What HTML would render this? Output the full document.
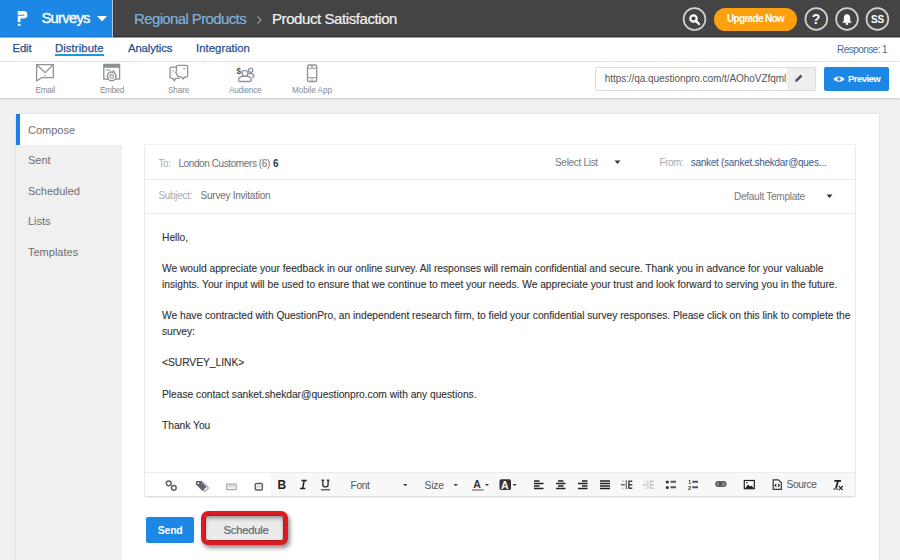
<!DOCTYPE html>
<html><head><meta charset="utf-8">
<style>
*{margin:0;padding:0;box-sizing:border-box}
html,body{width:900px;height:560px;overflow:hidden;background:#f1f1f1;font-family:"Liberation Sans",sans-serif}
.a{position:absolute}
.t{position:absolute;white-space:nowrap;line-height:1}
.nv{font-size:11.3px;color:#2b4f8e;-webkit-text-stroke:0.25px #2b4f8e}
#hdr{left:0;top:0;width:900px;height:37px;background:#444}
#blue{left:0;top:0;width:112px;height:37px;background:#1c87e5}
#nav{left:0;top:37px;width:900px;height:24px;background:#fff}
#tb{left:0;top:62px;width:900px;height:36px;background:#fff;box-shadow:0 1px 2px rgba(0,0,0,.18)}
#sep{left:0;top:61px;width:900px;height:1px;background:#e6e6e6}
#panel{left:16px;top:114px;width:863px;height:446px;background:#fff;box-shadow:0 0 2px rgba(0,0,0,.15)}
#side{left:16px;top:145px;width:106px;height:415px;background:#f0f0f0}
#bar{left:16px;top:114px;width:4px;height:31px;background:#1a7fe8}
#box{left:145px;top:145px;width:710px;height:351px;background:#fff;box-shadow:0 0 1px rgba(0,0,0,.25),0 1px 2px rgba(0,0,0,.15)}
.hl{position:absolute;left:145px;width:710px;height:1px;background:#ececec}
.body{font-family:"Liberation Sans",sans-serif;font-size:10.26px;color:#333;letter-spacing:-0.02px;-webkit-text-stroke:0.12px #333}
.circ{position:absolute;width:23px;height:23px;border:1.7px solid #d0d0d0;border-radius:50%}
.lab{font-size:8.3px;color:#868d96;letter-spacing:-0.25px;margin-top:0.3px}
.side{font-size:11px;color:#6e6e6e;letter-spacing:0px}
.ic{position:absolute}
</style></head><body>
<div id="hdr" class="a"></div>
<div id="blue" class="a"></div>
<div class="a" style="left:113px;top:36px;width:787px;height:1px;background:#2e2e2e"></div>
<div class="a" style="left:0;top:36px;width:112px;height:1px;background:#0a76d9"></div>
<div class="a" style="left:112px;top:0;width:1px;height:37px;background:#b5c9dc"></div>
<div class="a" style="left:0;top:37px;width:112px;height:1px;background:#8cc0ee;z-index:2"></div>
<div class="a" style="left:112px;top:37px;width:788px;height:1px;background:#a0a0a0;z-index:2"></div>
<div class="a" style="left:113px;top:0;width:1px;height:37px;background:#383838"></div>
<!-- logo -->
<svg class="ic" style="left:0;top:0" width="40" height="37" viewBox="0 0 40 37">
<path d="M17.8 11 H23.6 A3.8 3.8 0 0 1 23.6 18.6 H20.5 V22 H17.8 Z M17.8 14.7 V15.8 H23.8 A0.55 0.55 0 0 0 23.8 14.7 Z" fill="#fff" fill-rule="evenodd"/>
<rect x="17.8" y="23.7" width="2.7" height="2.2" fill="#fff"/>
</svg>
<div class="t" style="left:41.5px;top:11.2px;font-size:14.8px;color:#fff;letter-spacing:-0.75px;-webkit-text-stroke:0.35px #fff">Surveys</div>
<svg class="ic" style="left:97px;top:16px" width="10" height="6" viewBox="0 0 10 6"><path d="M0 0 H10 L5 5.5 Z" fill="#fff"/></svg>
<div class="t" style="left:134px;top:11.3px;font-size:15px;color:#7fb2dc;letter-spacing:-0.62px;-webkit-text-stroke:0.2px #7fb2dc">Regional Products</div>
<svg class="ic" style="left:256px;top:15px" width="7" height="10" viewBox="0 0 7 10"><path d="M1.5 1.5 L5 5 L1.5 8.5" fill="none" stroke="#9a9a9a" stroke-width="1.2"/></svg>
<div class="t" style="left:272px;top:11.3px;font-size:15px;color:#f2f2f2;letter-spacing:-0.42px;-webkit-text-stroke:0.2px #f2f2f2">Product Satisfaction</div>

<svg class="ic" style="left:0;top:0" width="900" height="37" viewBox="0 0 900 37">
<g fill="none" stroke="#d2d2d2" stroke-width="1.7">
<circle cx="694.5" cy="19.1" r="10.9"/><circle cx="816.3" cy="19" r="10.9"/><circle cx="847" cy="19" r="10.9"/><circle cx="877.4" cy="19" r="10.9"/>
</g></svg>
<svg class="ic" style="left:687px;top:12px" width="16" height="16" viewBox="0 0 16 16"><circle cx="6.5" cy="6.5" r="3.2" fill="none" stroke="#fff" stroke-width="2.2"/><path d="M8.8 8.8 L12 12" stroke="#fff" stroke-width="2.4" stroke-linecap="round"/></svg>
<div class="a" style="left:714px;top:8px;width:83px;height:23px;border-radius:12px;background:#fca00e"></div>
<div class="t" style="left:727px;top:14.3px;font-size:10px;font-weight:bold;color:#fff;letter-spacing:-0.68px">Upgrade Now</div>
<div class="t" style="left:811.8px;top:12.3px;font-size:14px;font-weight:bold;color:#fff">?</div>
<svg class="ic" style="left:841px;top:13px" width="12" height="13" viewBox="0 0 12 13"><path d="M6 1.2 C3.6 1.2 2.8 3 2.8 5 V7.8 L1.3 9.8 H10.7 L9.2 7.8 V5 C9.2 3 8.4 1.2 6 1.2 Z" fill="#fff"/><circle cx="6" cy="10.8" r="1.3" fill="#fff"/></svg>
<div class="t" style="left:871px;top:14.8px;font-size:10px;font-weight:bold;color:#fff;letter-spacing:-0.2px">SS</div>

<div id="nav" class="a"></div>
<div id="sep" class="a"></div>
<div class="t nv" style="left:12.5px;top:42.8px;letter-spacing:-0.1px">Edit</div>
<div class="t nv" style="left:55px;top:42.8px;letter-spacing:0.1px">Distribute</div>
<div class="a" style="left:55px;top:54px;width:49px;height:2px;background:#1b9ad8"></div>
<div class="t nv" style="left:128px;top:42.8px;letter-spacing:-0.1px">Analytics</div>
<div class="t nv" style="left:196px;top:42.8px;letter-spacing:0.05px">Integration</div>
<div class="t" style="left:837px;top:44.5px;font-size:10px;color:#3a6ea6;letter-spacing:-0.55px">Response: 1</div>

<div id="tb" class="a"></div>
<!-- toolbar icons -->
<svg class="ic" style="left:0;top:0" width="900" height="100" viewBox="0 0 900 100">
<g fill="none" stroke="#8d9299" stroke-width="1.3" stroke-linejoin="round">
<path d="M41.5 77.7 H53.3 V64.6 H36.6 V81 Z"/>
<path d="M37 65 L45.1 72.6 L53 65"/>
<path d="M44.2 75.5 H46" stroke-width="0.8"/>
<rect x="103.8" y="64.5" width="15.8" height="14.6"/>
<path d="M104 66.3 H119.5" stroke-width="3"/>
<path d="M106 70 H110.5 M112.2 71 H115" stroke-width="1"/>
<circle cx="111.7" cy="76.4" r="4.3" stroke-width="1.5" fill="#fff"/>
<circle cx="111.7" cy="76.4" r="1.8" stroke-width="1.1"/>
<path d="M176.2 67.1 H171.4 Q170 67.1 170 68.5 V77 Q170 78.4 171.4 78.4 H172.8 L174.3 81 L175.6 78.4 H179.5"/>
<path d="M177.8 65.3 H186.2 Q187.6 65.3 187.6 66.7 V75.7 Q187.6 77.1 186.2 77.1 H184.6 L183.2 79 L182.3 77.1"/>
<path d="M177.8 65.3 Q176.4 65.5 176.4 67.5 Q176.6 70 176.4 71 L175.6 72.6 Q176.3 73.2 176.6 73.6 Q176.4 74.6 177.2 75 Q177.6 76.6 179 76.6 H180.3 L181.5 78" />
<path d="M173 70 V71.6 M183.4 68.6 H185" stroke-width="1.1"/>
<circle cx="244.9" cy="73.3" r="3" fill="#fff"/>
<circle cx="250.7" cy="70.2" r="2.1"/>
<path d="M248 73.6 Q252.5 72.6 253.8 75.3 Q254.3 77 252 77.5"/>
<path d="M240.2 81.5 Q238.4 81.5 238.6 79.5 Q239 76.3 243 76.3 H246.8 Q251 76.3 251.3 79.5 Q251.5 81.5 249.6 81.5 Z" fill="#fff"/>
<rect x="307.5" y="65" width="9.2" height="16.5" rx="1.6"/>
<path d="M307.5 68.3 H316.7 M307.5 77.8 H316.7" stroke-width="1.1"/>
<path d="M311 66.7 H313.2 M312.1 78.6 V81" stroke-width="0.9"/>
</g>
<text x="236.6" y="73.6" font-family="Liberation Sans" font-size="9.5" font-weight="bold" fill="#4a4f58" transform="translate(236.6 0) scale(0.85 1) translate(-236.6 0)">$</text>
</svg>
<div class="t lab" style="left:35.5px;top:85.8px;letter-spacing:-0.3px">Email</div>
<div class="t lab" style="left:100px;top:85.8px;letter-spacing:-0.5px">Embed</div>
<div class="t lab" style="left:168px;top:85.8px;letter-spacing:-0.2px">Share</div>
<div class="t lab" style="left:228.9px;top:85.8px;letter-spacing:-0.25px">Audience</div>
<div class="t lab" style="left:292px;top:85.8px;letter-spacing:-0.1px">Mobile App</div>

<!-- URL box -->
<div class="a" style="left:595px;top:67px;width:221px;height:24px;border:1px solid #dcdcdc;background:#fff;border-radius:2px"></div>
<div class="a" style="left:787px;top:68px;width:28px;height:22px;background:#eeeeee"></div>
<div class="t" style="left:604.7px;top:73.7px;font-size:10px;color:#555;letter-spacing:-0.05px;width:182px;overflow:hidden">https://qa.questionpro.com/t/AOhoVZfqml</div>
<svg class="ic" style="left:793px;top:73px" width="11" height="11" viewBox="0 0 11 11"><path d="M2 9 L2.6 6.6 L7.6 1.6 L9.4 3.4 L4.4 8.4 Z" fill="#555"/></svg>
<div class="a" style="left:824px;top:67px;width:65px;height:24px;background:#1c87e5;border-radius:2px"></div>
<svg class="ic" style="left:833px;top:75px" width="12" height="8" viewBox="0 0 12 8"><path d="M0.5 4 C2.5 0.5 9.5 0.5 11.5 4 C9.5 7.5 2.5 7.5 0.5 4 Z" fill="#fff"/><circle cx="6" cy="4" r="1.7" fill="#1c87e5"/></svg>
<div class="t" style="left:848px;top:74px;font-size:9.6px;font-weight:bold;color:#fff;letter-spacing:-0.6px">Preview</div>

<!-- main panel -->
<div id="panel" class="a"></div>
<div id="side" class="a"></div>
<div id="bar" class="a"></div>
<div class="t side" style="left:28px;top:124.8px">Compose</div>
<div class="t side" style="left:28px;top:155px">Sent</div>
<div class="t side" style="left:28px;top:185.7px">Scheduled</div>
<div class="t side" style="left:28px;top:216.4px">Lists</div>
<div class="t side" style="left:28px;top:247.4px">Templates</div>

<div id="box" class="a"></div>
<div class="hl" style="top:179px"></div>
<div class="hl" style="top:213px"></div>
<div class="t" style="left:158.4px;top:158.5px;font-size:10px;color:#aaa;letter-spacing:-0.3px">To:</div>
<div class="t" style="left:178.4px;top:158.5px;font-size:10px;color:#6e6e6e;letter-spacing:-0.4px">London Customers (6)</div>
<div class="t" style="left:273px;top:158.5px;font-size:10px;font-weight:bold;color:#1f3a60">6</div>
<div class="t" style="left:555px;top:157.7px;font-size:10px;color:#777;letter-spacing:-0.3px">Select List</div>
<svg class="ic" style="left:614px;top:160px" width="7" height="5" viewBox="0 0 7 5"><path d="M0.5 0.5 H6.5 L3.5 4 Z" fill="#333"/></svg>
<div class="t" style="left:659.5px;top:157.7px;font-size:10px;color:#aaa;letter-spacing:-0.5px">From:</div>
<div class="t" style="left:690.7px;top:157.7px;font-size:10px;color:#3c5b8c;letter-spacing:-0.27px">sanket (sanket.shekdar@ques...</div>
<div class="t" style="left:158.4px;top:191.3px;font-size:10px;color:#aaa;letter-spacing:-0.3px">Subject:</div>
<div class="t" style="left:200.6px;top:191.3px;font-size:10px;color:#6e6e6e;letter-spacing:-0.25px">Survey Invitation</div>
<div class="t" style="left:734px;top:191.5px;font-size:10px;color:#777;letter-spacing:-0.25px">Default Template</div>
<svg class="ic" style="left:826px;top:194px" width="7" height="5" viewBox="0 0 7 5"><path d="M0.5 0.5 H6.5 L3.5 4 Z" fill="#333"/></svg>

<div class="t body" style="left:162px;top:232.6px">Hello,</div>
<div class="t body" style="left:162px;top:263.9px">We would appreciate your feedback in our online survey. All responses will remain confidential and secure. Thank you in advance for your valuable</div>
<div class="t body" style="left:162px;top:279.6px">insights. Your input will be used to ensure that we continue to meet your needs. We appreciate your trust and look forward to serving you in the future.</div>
<div class="t body" style="left:162px;top:311.0px">We have contracted with QuestionPro, an independent research firm, to field your confidential survey responses. Please click on this link to complete the</div>
<div class="t body" style="left:162px;top:326.7px">survey:</div>
<div class="t body" style="left:162px;top:358.1px">&lt;SURVEY_LINK&gt;</div>
<div class="t body" style="left:162px;top:389.5px">Please contact sanket.shekdar@questionpro.com with any questions.</div>
<div class="t body" style="left:162px;top:420.9px">Thank You</div>

<!-- editor toolbar -->
<div class="a" style="left:270px;top:473px;width:585px;height:23px;background:#f8f8f8"></div>
<div class="hl" style="top:472px;background:#ebebeb"></div>
<svg class="ic" style="left:0;top:0" width="900" height="560" viewBox="0 0 900 560">
<g fill="none" stroke="#5d626c" stroke-width="1.5">
<circle cx="168.7" cy="483.3" r="2.4"/><circle cx="173.8" cy="487.8" r="2.4"/>
</g>
<path d="M198.5 481.5 L202 481.5 L208.5 488 L205 491.5 L198.5 485 Z" fill="none" stroke="#5f6570" stroke-width="1"/>
<path d="M196 481 L200.5 481 L206.5 487 L202.5 491 L196 484.5 Z" fill="#5f6570"/>
<circle cx="198.3" cy="483.2" r="0.9" fill="#fff"/>
<rect x="226.6" y="484.2" width="9.6" height="5.4" rx="0.6" fill="#f2f2f2" stroke="#aaa" stroke-width="1.2"/>
<path d="M228 486.2 H235" stroke="#bbb" stroke-width="0.8"/>
<rect x="255.2" y="483.5" width="7.2" height="6.5" rx="1.3" fill="#f4f4f4" stroke="#5a5f6a" stroke-width="1.4"/>
<path d="M256.5 486.8 H261.5" stroke="#d49a6a" stroke-width="0.6"/>
<text x="277.4" y="489" font-family="Liberation Sans" font-weight="bold" font-size="12" fill="#222">B</text>
<path d="M301.5 480.5 H306.8 M300 488.6 H305.3 M304.2 480.5 L302.6 488.6" stroke="#222" stroke-width="1.5" fill="none"/>
<path d="M321.5 480.3 H324.2 M326.8 480.3 H329.4 M322.8 480.3 V484.8 C322.8 487.6 328.1 487.6 328.1 484.8 V480.3" stroke="#333" stroke-width="1.4" fill="none"/>
<path d="M321 489.8 H330" stroke="#333" stroke-width="1.1"/>
<text x="350.6" y="488.9" font-family="Liberation Sans" font-size="10.2" fill="#555" letter-spacing="-0.35">Font</text>
<path d="M403.2 484 H407.4 L405.3 486.3 Z" fill="#333"/>
<text x="424.6" y="488.9" font-family="Liberation Sans" font-size="10.2" fill="#555" letter-spacing="-0.2">Size</text>
<path d="M453.7 484 H457.9 L455.8 486.3 Z" fill="#333"/>
<text x="473.3" y="487.8" font-family="Liberation Sans" font-weight="bold" font-size="10.5" fill="#333">A</text>
<rect x="472" y="489.2" width="11.7" height="1.5" fill="#8a8a8a"/>
<path d="M485 484 H489 L487 486 Z" fill="#333"/>
<rect x="499.5" y="479.2" width="11.5" height="10.8" rx="1.8" fill="#333"/>
<text x="500.9" y="488.5" font-family="Liberation Sans" font-weight="bold" font-size="10.5" fill="#fff">A</text>
<path d="M512.5 484 H516.7 L514.6 486 Z" fill="#333"/>
<g stroke="#222" stroke-width="1.3">
<path d="M534 481 H539.5 M534 483.5 H543.5 M534 486 H539.5 M534 488.5 H543.5"/>
<path d="M558 481 H563.5 M556 483.5 H565.5 M558 486 H563.5 M556 488.5 H565.5"/>
<path d="M582 481 H587.5 M578 483.5 H587.5 M582 486 H587.5 M578 488.5 H587.5"/>
<path d="M600 481 H610 M600 483.5 H610 M600 486 H610 M600 488.5 H610"/>
</g>
<g stroke="#444" stroke-width="1.5" fill="none">
<path d="M626.3 480.3 V489.3" stroke-width="1.1" stroke="#555"/>
<path d="M628.3 481.2 H632.3 M628.3 484.7 H632.3 M628.3 488.2 H632.3 M628.9 481.2 V488.2"/>
<path d="M621 484.7 H624.8" stroke="#666" stroke-width="1.6"/>
<path d="M621.5 481.2 H624.5 M621.5 488.2 H624.5" stroke="#bbb" stroke-width="1"/>
</g>
<g stroke="#c8c8c8" stroke-width="1.5" fill="none">
<path d="M647.8 480.3 V489.3" stroke-width="1.1"/>
<path d="M649.8 481.2 H653.8 M649.8 484.7 H653.8 M649.8 488.2 H653.8 M650.4 481.2 V488.2"/>
<path d="M642.8 484.7 H646.5" stroke-width="1.6"/>
<path d="M643.3 481.2 H646 M643.3 488.2 H646" stroke="#e0e0e0" stroke-width="1"/>
</g>
<circle cx="667.3" cy="482" r="1.6" fill="#333"/><circle cx="667.3" cy="487.5" r="1.6" fill="#333"/>
<path d="M670.5 481.8 H676 M670.5 487.3 H676" stroke="#555" stroke-width="2"/>
<text x="688.2" y="483.7" font-family="Liberation Sans" font-weight="bold" font-size="5" fill="#333">1</text>
<text x="688" y="489.6" font-family="Liberation Sans" font-weight="bold" font-size="5.5" fill="#333">2</text>
<path d="M692.3 481.8 H698 M692.3 487.3 H698" stroke="#555" stroke-width="2"/>
<g fill="#8a8a8a" stroke="#555" stroke-width="1.2">
<rect x="715.8" y="481.6" width="6.4" height="4.9" rx="2.45"/><rect x="719.6" y="481.6" width="6.4" height="4.9" rx="2.45"/>
</g>
<path d="M719.5 484 H722.3" stroke="#333" stroke-width="1.2"/>
<rect x="744.3" y="480.5" width="10" height="8.2" fill="#fff" stroke="#222" stroke-width="1.2"/>
<path d="M745 488.5 L748 484.5 L750 486.5 L751.5 485.5 L754 488.5 Z" fill="#222"/>
<circle cx="747" cy="482.8" r="0.8" fill="#222"/>
<path d="M773.2 479.8 H778.3 L781.3 482.8 V489.3 H773.2 Z" fill="#fff" stroke="#333" stroke-width="1.2"/>
<path d="M776.4 483.8 L775 485.3 L776.4 486.8 M778 483.8 L779.4 485.3 L778 486.8" fill="none" stroke="#333" stroke-width="1.2"/>
<text x="786.5" y="487.9" font-family="Liberation Sans" font-size="10.2" fill="#555" letter-spacing="-0.35">Source</text>
<path d="M834.3 480.9 H841 M838.1 480.9 L836 488" stroke="#222" stroke-width="1.8" fill="none"/>
<path d="M833.3 489 H838" stroke="#222" stroke-width="1"/>
<path d="M838.8 486 L842.8 490.2 M842.8 486 L838.8 490.2" stroke="#222" stroke-width="1.1"/>
</svg>

<!-- buttons -->
<div class="a" style="left:146px;top:517px;width:48px;height:26px;background:#1c87e5;border-radius:2px"></div>
<div class="t" style="left:157.7px;top:525px;font-size:10.5px;font-weight:bold;color:#fff;letter-spacing:-0.2px">Send</div>
<div class="a" style="left:201.4px;top:511px;width:87px;height:34.3px;border:4.8px solid #da1b21;border-radius:7px;background:#ebebeb;box-shadow:2px 3px 4px rgba(0,0,0,.45), inset 0 0 0 1px #b3161b, inset 0 3px 4px rgba(0,0,0,.4)"></div>
<div class="t" style="left:223.5px;top:525.3px;font-size:11.3px;color:#5f6670;letter-spacing:-0.25px;-webkit-text-stroke:0.2px #5f6670">Schedule</div>
</body></html>
